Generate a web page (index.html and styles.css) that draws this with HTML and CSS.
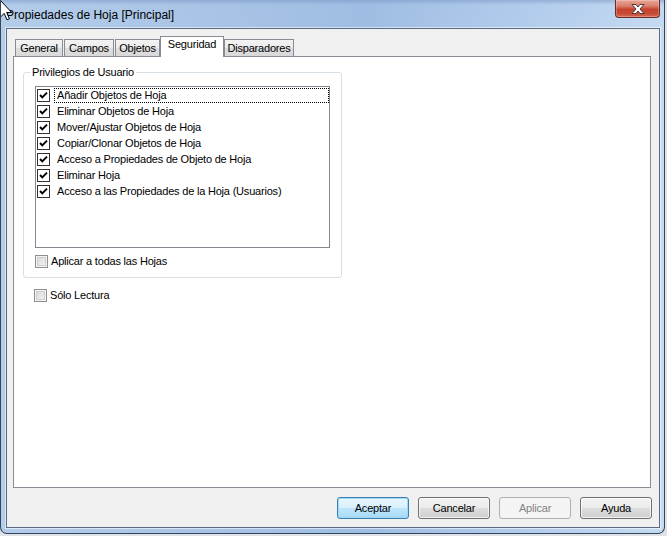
FILE: index.html
```html
<!DOCTYPE html>
<html lang="es">
<head>
<meta charset="utf-8">
<title>Propiedades de Hoja [Principal]</title>
<link rel="stylesheet" href="styles.css">
</head>
<body>
<div class="window">
  <svg class="cursor" width="14" height="22" viewBox="0 0 14 22"><path d="M1.5 0.5 L1.5 17 L5.2 13.4 L8 19.8 L10.4 18.8 L7.7 12.5 L12.7 12.5 Z" fill="#fff" stroke="#000" stroke-width="1" stroke-linejoin="round"/></svg>
  <div class="titlebar">
    <span class="title">Propiedades de Hoja [Principal]</span>
    <div class="close">
      <svg width="18" height="12" viewBox="0 0 18 12"><path d="M3 1.5 L7 1.5 L9 4 L11 1.5 L15 1.5 L11 6 L15 10.5 L11 10.5 L9 8 L7 10.5 L3 10.5 L7 6 Z" fill="#fff" stroke="#4a3a3a" stroke-width="1" stroke-linejoin="round"/></svg>
    </div>
  </div>
  <div class="client">
    <div class="tabs">
      <div class="tab tab-general">General</div>
      <div class="tab tab-campos">Campos</div>
      <div class="tab tab-objetos">Objetos</div>
      <div class="tab active tab-seguridad">Seguridad</div>
      <div class="tab tab-disparadores">Disparadores</div>
    </div>
    <div class="panel">
      <fieldset class="group">
        <legend class="legend">Privilegios de Usuario</legend>
        <ul class="listbox">
          <li class="item"><span class="lbox"><svg width="11" height="11" viewBox="0 0 11 11"><path d="M2 5 L4.3 7.4 L9 2.6" fill="none" stroke="#000" stroke-width="2"/></svg></span><span class="label focus">Añadir Objetos de Hoja</span></li>
          <li class="item"><span class="lbox"><svg width="11" height="11" viewBox="0 0 11 11"><path d="M2 5 L4.3 7.4 L9 2.6" fill="none" stroke="#000" stroke-width="2"/></svg></span><span class="label">Eliminar Objetos de Hoja</span></li>
          <li class="item"><span class="lbox"><svg width="11" height="11" viewBox="0 0 11 11"><path d="M2 5 L4.3 7.4 L9 2.6" fill="none" stroke="#000" stroke-width="2"/></svg></span><span class="label">Mover/Ajustar Objetos de Hoja</span></li>
          <li class="item"><span class="lbox"><svg width="11" height="11" viewBox="0 0 11 11"><path d="M2 5 L4.3 7.4 L9 2.6" fill="none" stroke="#000" stroke-width="2"/></svg></span><span class="label">Copiar/Clonar Objetos de Hoja</span></li>
          <li class="item"><span class="lbox"><svg width="11" height="11" viewBox="0 0 11 11"><path d="M2 5 L4.3 7.4 L9 2.6" fill="none" stroke="#000" stroke-width="2"/></svg></span><span class="label">Acceso a Propiedades de Objeto de Hoja</span></li>
          <li class="item"><span class="lbox"><svg width="11" height="11" viewBox="0 0 11 11"><path d="M2 5 L4.3 7.4 L9 2.6" fill="none" stroke="#000" stroke-width="2"/></svg></span><span class="label">Eliminar Hoja</span></li>
          <li class="item"><span class="lbox"><svg width="11" height="11" viewBox="0 0 11 11"><path d="M2 5 L4.3 7.4 L9 2.6" fill="none" stroke="#000" stroke-width="2"/></svg></span><span class="label">Acceso a las Propiedades de la Hoja (Usuarios)</span></li>
        </ul>
        <div class="check"><span class="box"></span><span>Aplicar a todas las Hojas</span></div>
      </fieldset>
      <div class="check readonly"><span class="box"></span><span>Sólo Lectura</span></div>
    </div>
    <div class="buttons">
      <div class="btn default">Aceptar</div>
      <div class="btn">Cancelar</div>
      <div class="btn disabled">Aplicar</div>
      <div class="btn">Ayuda</div>
    </div>
  </div>
</div>
</body>
</html>
```
FILE: styles.css
```css
html, body {
  margin: 0;
  padding: 0;
  background: #dfe3e8;
  font-family: "Liberation Sans", Arial, sans-serif;
  font-size: 11px;
  color: #000;
}

.window {
  position: relative;
  width: 663px;
  height: 533px;
  border: 1px solid #33465c;
  border-top: none;
  border-radius: 0 0 7px 7px;
  background:
    linear-gradient(180deg, rgba(120,150,195,0.55) 0px, rgba(160,190,230,0.1) 5px, rgba(255,255,255,0) 28px),
    linear-gradient(90deg, #b4cdea 0%, #a9c4e6 30%, #9fbde3 55%, #b3cdec 80%, #c6dbf2 100%);
  display: flex;
  flex-direction: column;
  overflow: hidden;
}

.cursor {
  position: absolute;
  left: -2px;
  top: 0;
  z-index: 5;
}

.titlebar {
  height: 28px;
  display: flex;
  align-items: flex-start;
}

.title {
  font-family: "Liberation Sans", Arial, sans-serif;
  font-size: 12px;
  margin: 8px 0 0 5px;
  line-height: 14px;
  color: #000;
}

.close {
  margin-left: auto;
  margin-right: 4px;
  width: 45px;
  height: 18px;
  box-sizing: border-box;
  border: 1px solid #6b2a23;
  border-top: none;
  border-radius: 0 0 4px 4px;
  background: linear-gradient(180deg, #e8a597 0%, #d9806d 35%, #c4432f 55%, #c84a34 80%, #d56a52 100%);
  display: flex;
  align-items: center;
  justify-content: center;
  box-shadow: inset 0 0 0 1px rgba(255,255,255,0.25);
}

.client {
  flex: 1;
  margin: 0 4px 5px 5px;
  border: 1px solid #5c6c80;
  background: #f0f0f0;
  display: flex;
  flex-direction: column;
  padding: 7px 8px 0 6px;
  box-shadow: 0 0 0 1px rgba(255,255,255,0.55);
  letter-spacing: -0.2px;
}

.tabs {
  display: flex;
  align-items: flex-end;
  height: 20px;
  padding-left: 2px;
}

.tab {
  height: 17px;
  box-sizing: border-box;
  border: 1px solid #898c95;
  border-bottom: none;
  padding: 2px 0 0 0;
  margin-right: 1px;
  background: linear-gradient(180deg, #f3f3f3 0%, #ebebeb 50%, #dedede 51%, #d9d9d9 100%);
  line-height: 13px;
  white-space: nowrap;
  text-align: center;
}

.tab-general { width: 48px; }
.tab-campos { width: 50px; }
.tab-objetos { width: 45px; }
.tab-seguridad { width: 64px; }
.tab-disparadores { width: 70px; }

.tab.active {
  position: relative;
  z-index: 1;
  height: 21px;
  margin: 0 0 -1px -1px;
  padding-top: 1px;
  background: #fff;
}

.panel {
  flex: 1;
  border: 1px solid #898c95;
  background: #fff;
  display: flex;
  flex-direction: column;
  align-items: flex-start;
}

.group {
  margin: 9px 0 0 9px;
  padding: 7px 11px 9px 11px;
  width: 295px;
  border: 1px solid #d5dfe5;
  border-radius: 3px;
  min-width: 0;
}

.legend {
  padding: 0 2px;
  margin-left: -5px;
  line-height: 13px;
}

.listbox {
  list-style: none;
  margin: 0;
  padding: 1px 0 0 0;
  width: 295px;
  height: 162px;
  box-sizing: border-box;
  border: 1px solid #828790;
  background: #fff;
}

.item {
  display: flex;
  align-items: flex-start;
  height: 16px;
}

.lbox {
  width: 13px;
  height: 13px;
  box-sizing: border-box;
  border: 1px solid #333;
  background: #fff;
  margin: 1px 4px 0 1px;
  display: flex;
  align-items: center;
  justify-content: center;
}

.label {
  flex: 1;
  height: 15px;
  box-sizing: border-box;
  padding: 0 0 0 2px;
  line-height: 12px;
  border: 1px solid transparent;
  white-space: nowrap;
}

.label.focus {
  border: 1px dotted #000;
}

.check {
  display: flex;
  align-items: center;
  margin-top: 7px;
  height: 13px;
  line-height: 13px;
}

.box {
  width: 13px;
  height: 13px;
  box-sizing: border-box;
  border: 1px solid #8e8f8f;
  background: linear-gradient(135deg, #d6d6d6 0%, #e8e8e8 60%, #f6f6f6 100%);
  box-shadow: inset 0 0 0 1px #f4f4f4, inset 0 0 0 2px #cfcfcf;
  margin-right: 3px;
}

.readonly {
  margin: 11px 0 0 20px;
}

.buttons {
  display: flex;
  justify-content: flex-end;
  gap: 9px;
  padding: 9px 0 8px 0;
  margin-right: -1px;
}

.btn {
  width: 72px;
  height: 22px;
  box-sizing: border-box;
  border: 1px solid #707070;
  border-radius: 3px;
  background: linear-gradient(180deg, #f2f2f2 0%, #ebebeb 48%, #dddddd 52%, #cfcfcf 100%);
  box-shadow: inset 0 0 0 1px rgba(255,255,255,0.7);
  display: flex;
  align-items: center;
  justify-content: center;
  line-height: 13px;
}

.btn.default {
  border-color: #3c7fb1;
  background: linear-gradient(180deg, #eaf6fd 0%, #d9f0fc 48%, #bee6fd 52%, #a7d9f5 100%);
  box-shadow: inset 0 0 0 1px #9fdaf8;
}

.btn.disabled {
  border-color: #adb2b5;
  background: #f4f4f4;
  box-shadow: none;
  color: #838383;
}
```
